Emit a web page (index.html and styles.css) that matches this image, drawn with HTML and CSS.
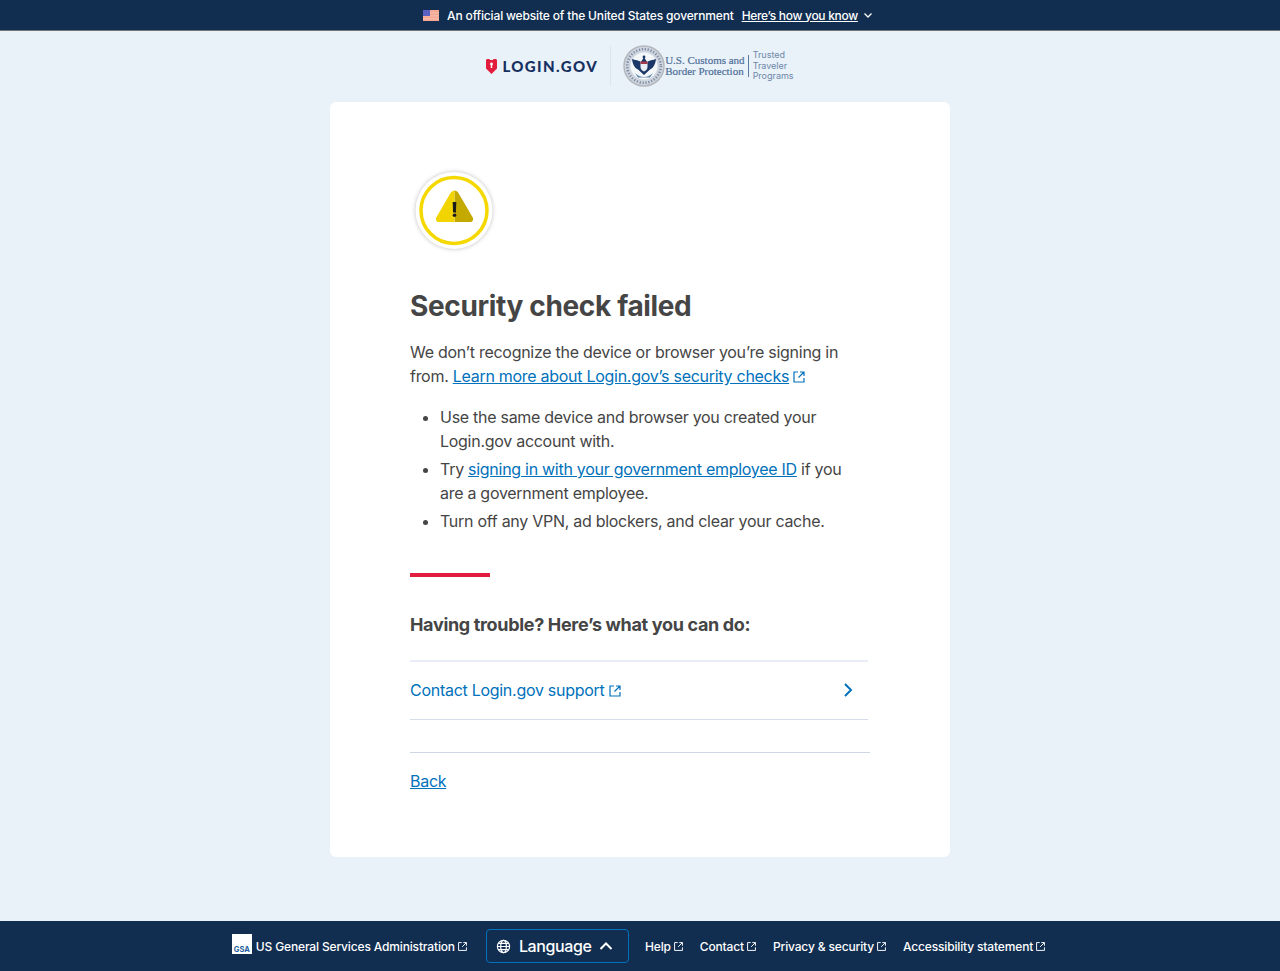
FILE: index.html
```html
<!DOCTYPE html>
<html lang="en">
<head>
    <meta charset="UTF-8">
    <meta name="viewport" content="width=device-width, initial-scale=1.0">
    <title>Security check failed | Login.gov</title>
    <link rel="stylesheet" href="styles.css">
</head>
<body>
    <div class="banner">
        <svg class="flag" width="16" height="11" viewBox="0 0 16 11">
            <rect width="16" height="11" fill="#f4a793"/>
            <rect y="2" width="16" height="1.5" fill="#f6b8a6"/>
            <rect y="5" width="16" height="1.5" fill="#f6b8a6"/>
            <rect y="8" width="16" height="1.5" fill="#f6b8a6"/>
            <rect width="7" height="6" fill="#5a5fc4"/>
        </svg>
        <span class="banner-text">An official website of the United States government</span>
        <a class="banner-link" href="#">Here’s how you know</a>
        <svg class="banner-caret" width="10" height="10" viewBox="0 0 10 10"><path d="M1.5 3.500 5 7l3.500-3.500" fill="none" stroke="#fff" stroke-width="1.300"/></svg>
    </div>

    <header class="brand">
        <div class="login-logo">
            <svg width="11" height="15" viewBox="0 0 11 15">
                <path d="M0 1 1 0h2.500l.5 1h3l.5-1H10l1 1v8.500L9 11.500l-3.500 3.500L2 11.500 0 9.500z" fill="#e21c3d"/>
                <circle cx="5.500" cy="5" r="1.400" fill="#fff"/>
                <rect x="4.800" y="5" width="1.400" height="4" fill="#fff"/>
            </svg>
            <span class="login-word">LOGIN.GOV</span>
        </div>
        <div class="brand-divider"></div>
        <div class="partner">
            <svg class="seal" width="42" height="42" viewBox="0 0 42 42">
                <circle cx="21" cy="21" r="20" fill="#cfd6e0" stroke="#b4b8be" stroke-width="1.500"/>
                <circle cx="21" cy="21" r="20" fill="none" stroke="#7e8ba0" stroke-width="3" stroke-dasharray="1.500 2" transform="scale(.84) translate(4 4)"/>
                <circle cx="21" cy="21" r="13.500" fill="#f4f7fa"/>
                <path d="M9 14c3 1 7 1.500 9 3l3-5 3 5c2-1.500 6-2 9-3-.5 5-2.500 9-6 10.500L21 30l-6-5.500C11.500 23 9.500 19 9 14z" fill="#1a3768"/>
                <path d="M17.500 17h7v5c0 2-1.500 3.500-3.500 4.500-2-1-3.500-2.500-3.500-4.500z" fill="#e9eef5"/>
                <rect x="17.500" y="16.500" width="7" height="2.500" fill="#a5394a"/>
                <path d="M12 28c3 2.500 5.500 4 9 4s6-1.500 9-4l-3 4.500H15z" fill="#5d86a8"/>
                <circle cx="21" cy="12" r="1.400" fill="#1a3768"/>
            </svg>
            <div class="partner-name">U.S. Customs and<br>Border Protection</div>
            <div class="partner-program">Trusted<br>Traveler<br>Programs</div>
        </div>
    </header>

    <main class="card">
        <svg class="status-icon" width="88" height="88" viewBox="0 0 88 88">
            <circle cx="44" cy="43.500" r="38.500" fill="#fff"/>
            <circle cx="44" cy="43.500" r="33" fill="#fff" stroke="#f5d800" stroke-width="3.500"/>
            <path d="M44.500 23.500c1.800 0 3 1 3.800 2.300l14.300 24.400c1.300 2.400 0 4.800-2.800 4.800H44.500z" fill="#c4a900"/>
            <path d="M44.500 23.500c-1.800 0-3 1-3.800 2.300L26.400 50.200c-1.300 2.400 0 4.800 2.800 4.800h15.300z" fill="#f2d400"/>
            <path d="M42.700 35h3.600l-.4 10.500h-2.800z" fill="#1b1b1b"/>
            <circle cx="44.500" cy="48.300" r="1.800" fill="#1b1b1b"/>
        </svg>

        <h1>Security check failed</h1>

        <p class="intro">We don’t recognize the device or browser you’re signing in from. <a href="#">Learn more about Login.gov’s security checks<svg class="ext-icon" width="14" height="14" viewBox="0 0 14 14"><path d="M6 2H2v10h10V8M8 2h4v4M12 2 6.500 7.500" fill="none" stroke="currentColor" stroke-width="1.200"/></svg></a></p>

        <ul class="tips">
            <li>Use the same device and browser you created your Login.gov account with.</li>
            <li>Try <a href="#">signing in with your government employee ID</a> if you are a government employee.</li>
            <li>Turn off any VPN, ad blockers, and clear your cache.</li>
        </ul>

        <div class="red-rule"></div>

        <h2>Having trouble? Here’s what you can do:</h2>

        <a class="trouble-row" href="#">
            <span>Contact Login.gov support<svg class="ext-icon" width="14" height="14" viewBox="0 0 14 14"><path d="M6 2H2v10h10V8M8 2h4v4M12 2 6.500 7.500" fill="none" stroke="currentColor" stroke-width="1.200"/></svg></span>
            <svg width="10" height="16" viewBox="0 0 10 16"><path d="M2 2l6 6-6 6" fill="none" stroke="currentColor" stroke-width="2"/></svg>
        </a>

        <div class="back-row"><a href="#">Back</a></div>
    </main>

    <footer class="footer">
        <a class="foot-link gsa-link" href="#">
            <span class="gsa-badge">GSA</span>
            US General Services Administration<svg class="foot-ext" width="11" height="11" viewBox="0 0 14 14"><path d="M6 2H2v10h10V8M8 2h4v4M12 2 6.500 7.500" fill="none" stroke="currentColor" stroke-width="1.200"/></svg>
        </a>
        <button class="lang-button">
            <svg width="15" height="15" viewBox="0 0 16 16" fill="none" stroke="#fff" stroke-width="1.300"><circle cx="8" cy="8" r="6.500"/><ellipse cx="8" cy="8" rx="3" ry="6.500"/><path d="M1.500 8h13M2.500 4.700h11M2.500 11.300h11"/></svg>
            <span>Language</span>
            <svg width="14" height="10" viewBox="0 0 14 10"><path d="M1.500 8 7 2.500 12.500 8" fill="none" stroke="#fff" stroke-width="2"/></svg>
        </button>
        <nav class="foot-nav">
            <a class="foot-link" href="#">Help<svg class="foot-ext" width="11" height="11" viewBox="0 0 14 14"><path d="M6 2H2v10h10V8M8 2h4v4M12 2 6.500 7.500" fill="none" stroke="currentColor" stroke-width="1.200"/></svg></a>
            <a class="foot-link" href="#">Contact<svg class="foot-ext" width="11" height="11" viewBox="0 0 14 14"><path d="M6 2H2v10h10V8M8 2h4v4M12 2 6.500 7.500" fill="none" stroke="currentColor" stroke-width="1.200"/></svg></a>
            <a class="foot-link" href="#">Privacy &amp; security<svg class="foot-ext" width="11" height="11" viewBox="0 0 14 14"><path d="M6 2H2v10h10V8M8 2h4v4M12 2 6.500 7.500" fill="none" stroke="currentColor" stroke-width="1.200"/></svg></a>
            <a class="foot-link" href="#">Accessibility statement<svg class="foot-ext" width="11" height="11" viewBox="0 0 14 14"><path d="M6 2H2v10h10V8M8 2h4v4M12 2 6.500 7.500" fill="none" stroke="currentColor" stroke-width="1.200"/></svg></a>
        </nav>
    </footer>
</body>
</html>
```

FILE: styles.css
```css
* {
    box-sizing: border-box;
}

body {
    font-family: Inter, "Noto Sans", sans-serif;
    margin: 0;
    min-height: 971px;
    background-color: #e9f1f9;
    color: #454545;
    display: flex;
    flex-direction: column;
}

a {
    color: #0071bb;
}

/* Top banner */
.banner {
    height: 31px;
    padding-left: 16px;
    background-color: #112e51;
    border-bottom: 1px solid #71767a;
    color: #fff;
    display: flex;
    align-items: center;
    justify-content: center;
    font-size: 12px;
    font-weight: 500;
}

.flag {
    margin-right: 8px;
}

.banner-text {
    margin-right: 8px;
    letter-spacing: -0.16px;
}

.banner-link {
    color: #fff;
    text-decoration: underline;
    letter-spacing: -0.3px;
}

.banner-caret {
    margin-left: 5px;
}

/* Logos */
.brand {
    height: 71px;
    padding-bottom: 1px;
    display: flex;
    align-items: center;
    justify-content: center;
}

.login-logo {
    display: flex;
    align-items: center;
    gap: 5px;
}

.login-word {
    font-family: Lato, sans-serif;
    font-size: 15px;
    font-weight: 900;
    letter-spacing: 1.400px;
    color: #16305f;
}

.brand-divider {
    width: 1px;
    height: 40px;
    background-color: #dbe5ef;
    margin: 0 12px;
}

.partner {
    display: flex;
    align-items: center;
}

.partner-name {
    font-family: "Liberation Serif", serif;
    font-size: 11px;
    line-height: 11px;
    color: #4f6f98;
    padding-right: 3px;
    border-right: 1px solid #5d7ba0;
    -webkit-text-stroke: 0.2px #4f6f98;
}

.partner-program {
    font-family: Inter, sans-serif;
    font-size: 9px;
    line-height: 10.500px;
    color: #6f88a8;
    padding-left: 4px;
}

/* Main card */
.card {
    width: 620px;
    height: 755px;
    margin: 0 auto;
    background-color: #fff;
    border-radius: 6px;
    padding: 65px 80px 0;
}

.status-icon {
    display: block;
    filter: drop-shadow(0 0 2px rgba(0, 0, 0, 0.25));
}

h1 {
    font-size: 28px;
    line-height: 34px;
    font-weight: 700;
    margin: 34px 0 0;
    letter-spacing: -0.35px;
}

.intro {
    font-size: 16px;
    line-height: 24px;
    letter-spacing: -0.28px;
    margin: 17px 0 0;
}

.ext-icon {
    margin-left: 3px;
    vertical-align: -2px;
}

.tips {
    font-size: 16px;
    line-height: 24px;
    letter-spacing: -0.28px;
    margin: 17px 0 0;
    padding: 0 20px 0 30px;
}

.tips li {
    margin-bottom: 4px;
}

.red-rule {
    width: 80px;
    height: 4px;
    background-color: #e21c3d;
    margin-top: 40px;
}

h2 {
    font-size: 18px;
    line-height: 24px;
    font-weight: 700;
    letter-spacing: -0.33px;
    margin: 36px 0 0;
}

.trouble-row {
    width: 458px;
    height: 60px;
    margin-top: 23px;
    padding: 0 15px 2px 0;
    border-top: 2px solid #e9edf7;
    border-bottom: 1px solid #d5dcea;
    display: flex;
    align-items: center;
    justify-content: space-between;
    font-size: 16px;
    letter-spacing: -0.28px;
    text-decoration: none;
}

.back-row {
    width: 460px;
    margin-top: 32px;
    border-top: 1px solid #ccd8e8;
    padding-top: 16px;
    font-size: 16px;
    line-height: 24px;
    letter-spacing: -0.28px;
}

/* Footer */
.footer {
    margin-top: auto;
    height: 50px;
    padding-right: 2px;
    background-color: #112e51;
    display: flex;
    align-items: center;
    justify-content: center;
}

.foot-link {
    color: #fff;
    text-decoration: none;
    font-size: 12px;
    font-weight: 500;
    letter-spacing: -0.15px;
    display: flex;
    align-items: center;
}

.foot-ext {
    margin-left: 2px;
}

.gsa-badge {
    width: 20px;
    height: 20px;
    background-color: #fff;
    color: #1f5fa0;
    font-size: 7.500px;
    font-weight: 700;
    letter-spacing: 0;
    display: flex;
    align-items: flex-end;
    justify-content: center;
    margin-right: 4px;
    margin-top: -4px;
}

.lang-button {
    width: 143px;
    height: 34px;
    margin-left: 18px;
    padding: 0 0 0 9px;
    background: transparent;
    border: 1px solid #0071bb;
    border-radius: 4px;
    color: #fff;
    font-family: inherit;
    font-size: 16px;
    font-weight: 500;
    letter-spacing: -0.4px;
    display: flex;
    align-items: center;
    gap: 8px;
}

.foot-nav {
    display: flex;
    gap: 16px;
    margin-left: 16px;
}
```
